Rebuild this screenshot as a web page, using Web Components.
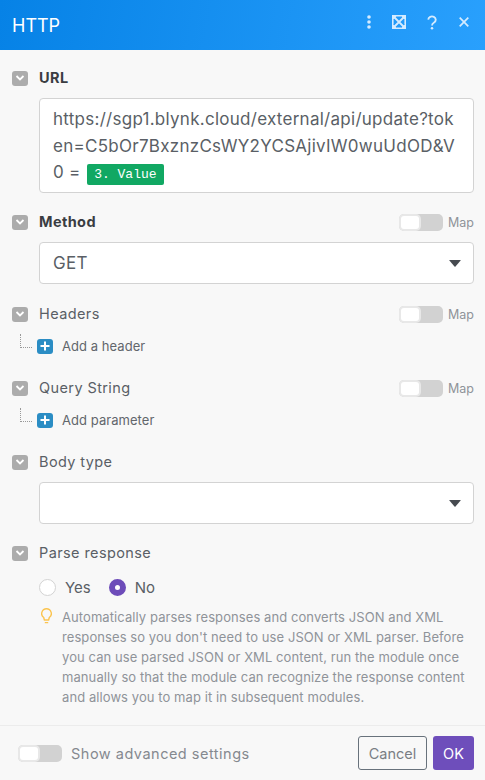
<!DOCTYPE html>
<html>
<head>
<meta charset="utf-8">
<title>HTTP</title>
<style>
  html, body { margin: 0; padding: 0; }
  body {
    width: 485px;
    height: 780px;
    overflow: hidden;
    background: #f8f8f8;
    font-family: Inter, "Liberation Sans", sans-serif;
    color: #3f444b;
  }
</style>
</head>
<body>
<module-dialog title="HTTP">
  <form-section label="URL" strong>
    <url-box>https://sgp1.blynk.cloud/external/api/update?token=C5bOr7BxznzCsWY2YCSAjivIW0wuUdOD&amp;V<url-tail>0 = <value-pill>3. Value</value-pill></url-tail></url-box>
  </form-section>
  <form-section label="Method" strong map>
    <select-box value="GET"></select-box>
  </form-section>
  <form-section label="Headers" map>
    <add-link>Add a header</add-link>
  </form-section>
  <form-section label="Query String" map>
    <add-link>Add parameter</add-link>
  </form-section>
  <form-section label="Body type" style="margin-bottom:21px">
    <select-box></select-box>
  </form-section>
  <form-section label="Parse response">
    <radio-row></radio-row>
    <hint-note>Automatically parses responses and converts JSON and XML responses so you don't need to use JSON or XML parser. Before you can use parsed JSON or XML content, run the module once manually so that the module can recognize the response content and allows you to map it in subsequent modules.</hint-note>
  </form-section>
</module-dialog>

<script>
const defineEl = (name, html) => {
  const tpl = document.createElement("template");
  tpl.innerHTML = html;
  customElements.define(name, class extends HTMLElement {
    constructor() {
      super();
      this.attachShadow({ mode: "open" }).appendChild(tpl.content.cloneNode(true));
    }
  });
};

defineEl("toggle-switch", `
  <style>
    :host { display: inline-block; width: 44px; height: 17px; background: #d2d2d2; border-radius: 5px; }
    #knob { box-sizing: border-box; width: 22px; height: 17px; background: #fff; border: 2px solid #e8e8e8; border-radius: 5px; }
  </style>
  <div id="knob"></div>`);

class FormSection extends HTMLElement {
  constructor() {
    super();
    const strong = this.hasAttribute("strong");
    const map = this.hasAttribute("map");
    this.attachShadow({ mode: "open" }).innerHTML = `
      <style>
        :host { display: block; }
        #head { display: flex; align-items: center; height: 16px; padding: 0 11px 0 12px; }
        #chev { width: 16px; height: 15px; background: #acacac; border-radius: 3px; display: flex; align-items: center; justify-content: center; margin-right: 11px; }
        #label { flex: 1; padding-bottom: 2px; font-size: 14.5px; letter-spacing: 0.4px; font-weight: ${strong ? 700 : 400}; color: ${strong ? "#3a3d42" : "#5a5f66"}; }
        #map { display: ${map ? "flex" : "none"}; align-items: center; gap: 5px; font-size: 12.5px; color: #8f9399; }
        #body { padding-left: 39px; padding-right: 11px; }
      </style>
      <div id="head">
        <div id="chev"><svg width="10" height="6" viewBox="0 0 10 6"><path d="M1.5 1 L5 4.5 L8.5 1" fill="none" stroke="#fff" stroke-width="1.8"/></svg></div>
        <div id="label">${this.getAttribute("label")}</div>
        <div id="map"><toggle-switch></toggle-switch>Map</div>
      </div>
      <div id="body"><slot></slot></div>`;
  }
}
customElements.define("form-section", FormSection);

defineEl("url-box", `
  <style>
    :host { display: block; box-sizing: border-box; height: 95px; margin: 12px 0 -1px; background: #fff; border: 1px solid #d3d3d3; border-radius: 4px; padding: 7px 13px; font-size: 17px; letter-spacing: 0.27px; line-height: 26.5px; color: #5a5f66; word-break: break-all; }
  </style>
  <slot></slot>`);

defineEl("url-tail", `
  <style>
    :host { display: block; }
  </style>
  <slot></slot>`);

defineEl("value-pill", `
  <style>
    :host { display: inline-block; background: #11a863; color: #fff; border-radius: 2px; font-family: "Liberation Mono", monospace; font-size: 13px; letter-spacing: 0; line-height: 21px; height: 21px; padding: 0 7.5px; margin-left: 1px; word-break: normal; }
  </style>
  <slot></slot>`);

class SelectBox extends HTMLElement {
  constructor() {
    super();
    this.attachShadow({ mode: "open" }).innerHTML = `
      <style>
        :host { display: flex; align-items: center; justify-content: space-between; box-sizing: border-box; height: 42px; margin-top: 12px; background: #fff; border: 1px solid #d3d3d3; border-radius: 4px; padding: 0 12px 0 13px; font-size: 17px; letter-spacing: 0.27px; color: #5a5f66; }
      </style>
      <span>${this.getAttribute("value") || ""}</span>
      <svg width="12" height="7" viewBox="0 0 12 7"><path d="M0.5 0 H11.5 Q12 0 11.6 0.6 L6.5 6.6 Q6 7 5.5 6.6 L0.4 0.6 Q0 0 0.5 0 Z" fill="#464a50"/></svg>`;
  }
}
customElements.define("select-box", SelectBox);

defineEl("add-link", `
  <style>
    :host { display: flex; align-items: center; position: relative; margin: 16px 0 4px -2px; height: 16px; font-size: 13px; letter-spacing: 0.05px; color: #62666c; }
    #tree { position: absolute; left: -17px; top: -4px; width: 11px; height: 13px; border-left: 1px dotted #999; border-bottom: 1px dotted #999; }
    #plus { width: 16px; height: 15px; background: #2b8dc4; border-radius: 3px; margin-right: 9px; display: flex; align-items: center; justify-content: center; }
  </style>
  <div id="tree"></div>
  <div id="plus"><svg width="10" height="10" viewBox="0 0 10 10"><path d="M5 0.5 V9.5 M0.5 5 H9.5" stroke="#fff" stroke-width="2"/></svg></div>
  <slot></slot>`);

defineEl("radio-row", `
  <style>
    :host { display: flex; align-items: center; margin-top: 17px; height: 18px; font-size: 15px; color: #5a5f66; }
    .r { width: 17px; height: 17px; box-sizing: border-box; border-radius: 50%; border: 1px solid #d3d3d3; background: #fff; margin-right: 9px; }
    .on { border: 6px solid #6d4cb9; }
    span { margin-right: 18px; }
  </style>
  <div class="r"></div><span>Yes</span>
  <div class="r on"></div><span>No</span>`);

defineEl("hint-note", `
  <style>
    :host { display: flex; margin: 11px 0 0; font-size: 13px; letter-spacing: 0.08px; line-height: 20px; color: #8f9399; }
    svg { flex: none; margin: 1px 10px 0 2px; }
  </style>
  <svg width="11" height="16" viewBox="0 0 11 16"><path d="M5.5 0.8 A4.8 4.8 0 0 0 2.7 9.5 L3.4 12 H7.6 L8.3 9.5 A4.8 4.8 0 0 0 5.5 0.8 Z M3.8 14.6 H7.2" fill="none" stroke="#fbc44f" stroke-width="1.4"/></svg>
  <div><slot></slot></div>`);

class ModuleDialog extends HTMLElement {
  constructor() {
    super();
    this.attachShadow({ mode: "open" }).innerHTML = `
      <style>
        :host { display: flex; flex-direction: column; height: 780px; }
        header { height: 50px; flex: none; display: flex; align-items: center; padding: 0 16px 0 12px; color: #fff; background: linear-gradient(100deg, #0682e6, #29a0fd); }
        h1 { flex: 1; margin: 0; font-size: 18px; font-weight: 400; }
        #tools { display: flex; align-items: center; }
        main { flex: 1; min-height: 0; overflow: hidden; padding-top: 20px; display: flex; flex-direction: column; }
        ::slotted(form-section) { margin-bottom: 22px; flex: none; }
        footer { flex: none; height: 55px; box-sizing: border-box; border-top: 1px solid #ececec; display: flex; align-items: center; padding: 0 11px 0 18px; font-size: 14.5px; letter-spacing: 0.5px; color: #85898f; }
        footer span { flex: 1; margin-left: 9px; }
        button { font: inherit; height: 34px; border-radius: 3px; box-sizing: border-box; padding: 0; }
        #cancel { width: 69px; background: transparent; border: 1px solid #68727c; color: #7a7e84; margin-right: 6px; }
        #ok { width: 41px; background: #6e4ebb; border: 0; color: #fff; }
      </style>
      <header>
        <h1>${this.getAttribute("title")}</h1>
        <div id="tools">
          <svg width="6" height="14" viewBox="0 0 6 14" style="margin-right:20px;margin-top:-6px"><circle cx="3" cy="2" r="1.8" fill="#d4ebff"/><circle cx="3" cy="7" r="1.8" fill="#d4ebff"/><circle cx="3" cy="12" r="1.8" fill="#d4ebff"/></svg>
          <svg width="14" height="14" viewBox="0 0 14 14" style="margin-right:21px;margin-top:-6px"><path d="M5 0.8 H9 M5 13.2 H9 M0.8 5 V9 M13.2 5 V9" stroke="#d4ebff" stroke-width="1.6"/><path d="M2 2 L12 12 M12 2 L2 12" stroke="#d4ebff" stroke-width="1.8"/><path d="M0 0 H6 L0 6 Z M14 0 H8 L14 6 Z M0 14 H6 L0 8 Z M14 14 H8 L14 8 Z" fill="#d4ebff"/></svg>
          <svg width="10" height="15" viewBox="0 0 12 17" style="margin-right:22px;margin-top:-6px"><path d="M1.5 5 A4.5 4 0 1 1 8.5 8.5 C6.8 9.5 6 10 6 12" fill="none" stroke="#d4ebff" stroke-width="2.2"/><circle cx="6" cy="15.3" r="1.5" fill="#d4ebff"/></svg>
          <svg width="10" height="10" viewBox="0 0 10 10" style="margin-top:-6px"><path d="M0.7 0.7 L9.3 9.3 M9.3 0.7 L0.7 9.3" stroke="#d4ebff" stroke-width="1.7"/></svg>
        </div>
      </header>
      <main><slot></slot></main>
      <footer>
        <toggle-switch></toggle-switch>
        <span>Show advanced settings</span>
        <button id="cancel">Cancel</button>
        <button id="ok">OK</button>
      </footer>`;
  }
}
customElements.define("module-dialog", ModuleDialog);
</script>
</body>
</html>
